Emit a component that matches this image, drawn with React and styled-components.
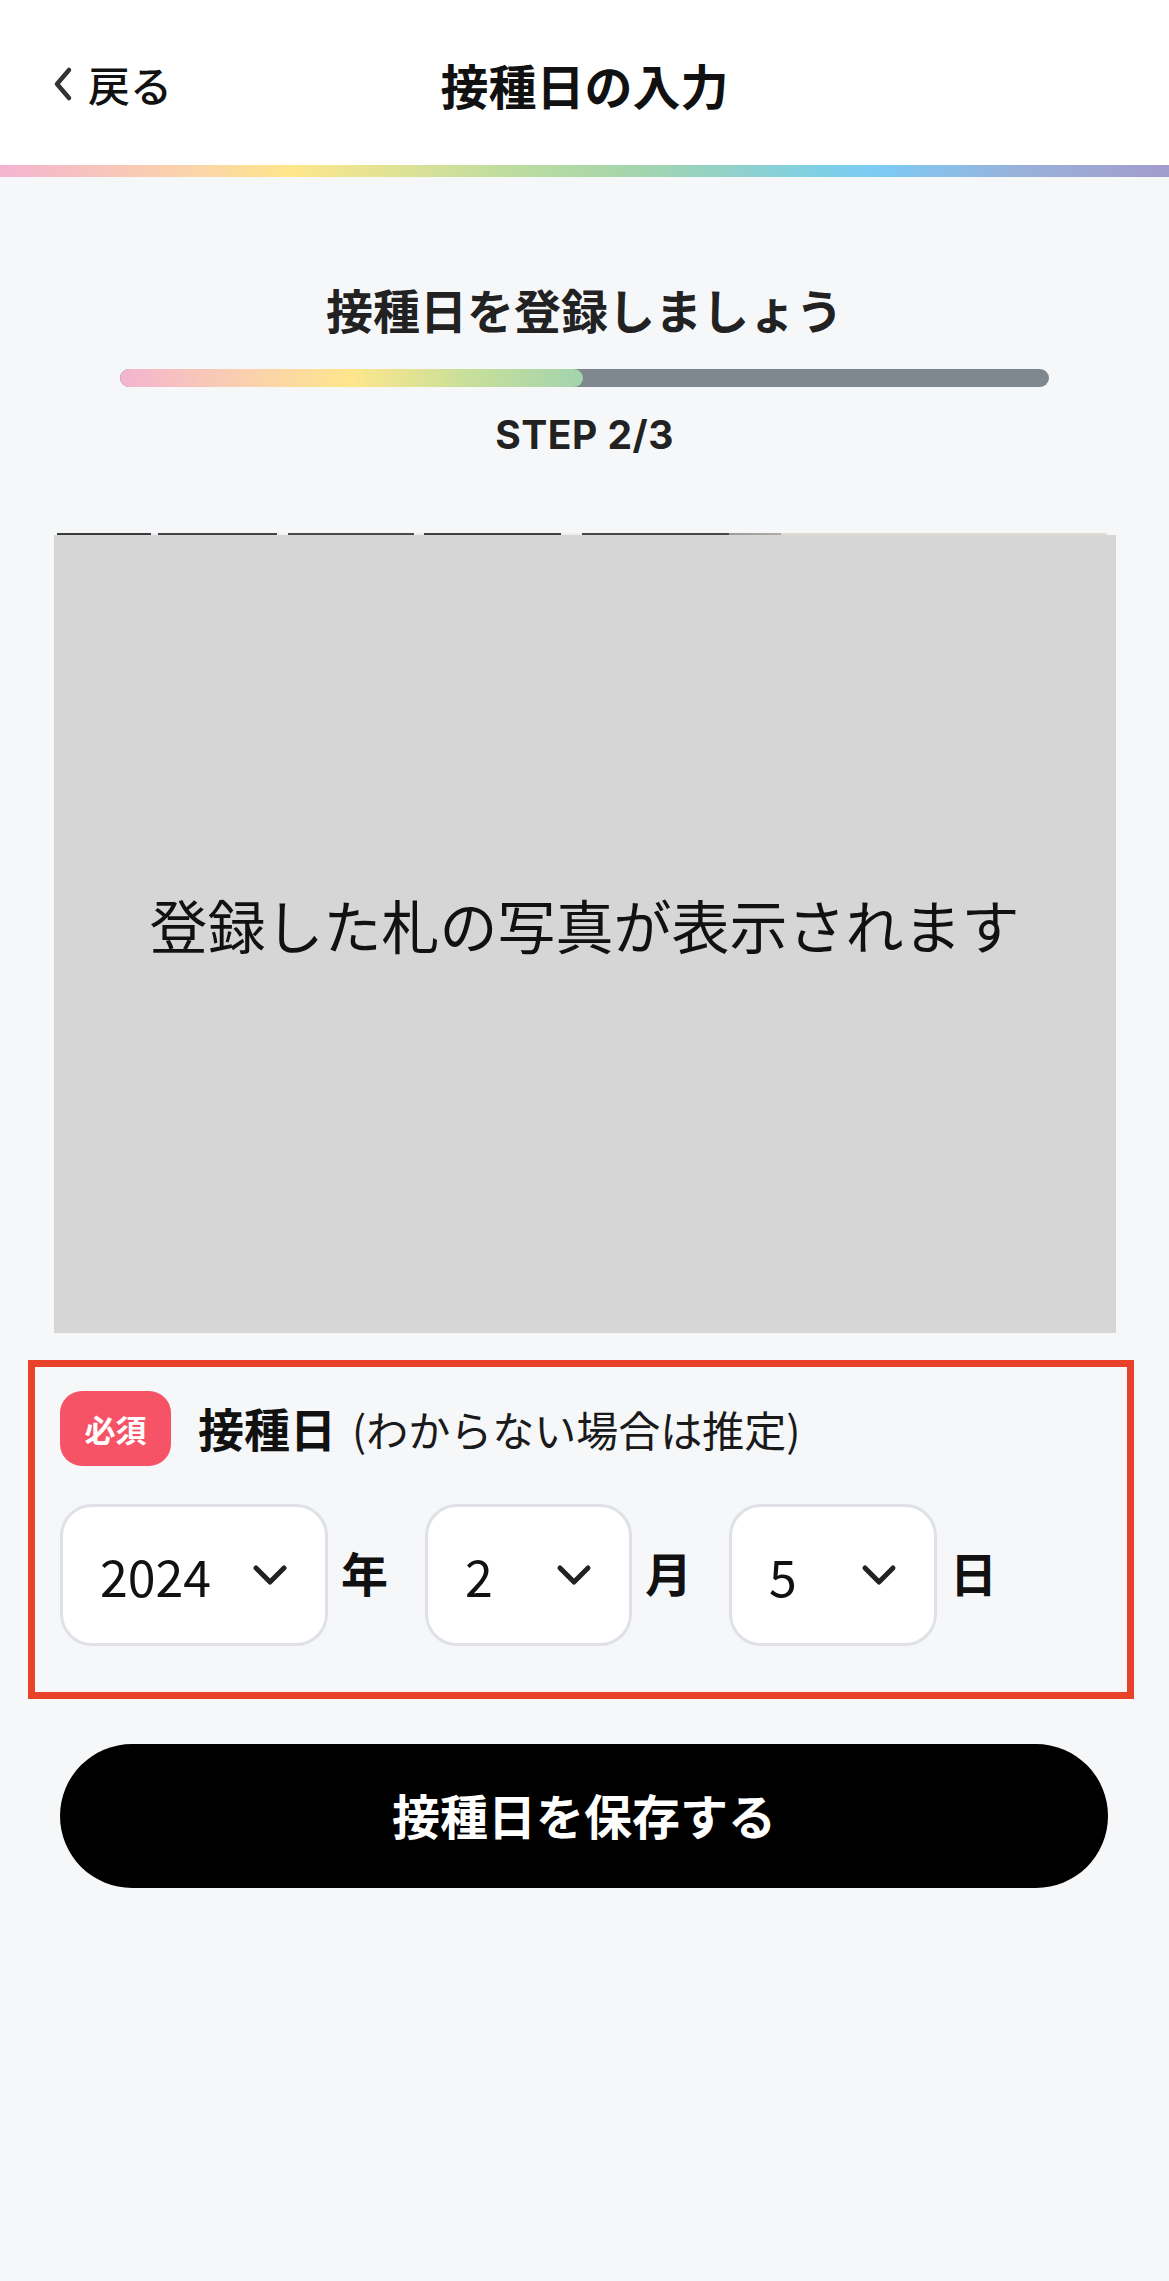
import React from "react";
import styled, { createGlobalStyle } from "styled-components";

const Global = createGlobalStyle`
  html, body { margin: 0; padding: 0; }
  body {
    background: #f6f7f9;
    font-family: "Noto Sans CJK JP", "Noto Sans", sans-serif;
    color: #1c1c1c;
  }
`;

const Page = styled.div`
  width: 1169px;
  min-height: 2281px;
  background: #f6f7f9;
`;

const Header = styled.header`
  height: 165px;
  background: #ffffff;
  display: grid;
  grid-template-columns: 1fr auto 1fr;
  align-items: center;
`;

const Back = styled.div`
  display: flex;
  align-items: center;
  gap: 14px;
  padding-left: 52px;
  font-size: 42px;
  font-weight: 500;
  line-height: 1;
  color: #111;
  padding-top: 2px;
`;

const Title = styled.h1`
  margin: 0;
  font-size: 48px;
  font-weight: 700;
  line-height: 1;
  color: #111;
  padding-top: 2px;
`;

const Rainbow = styled.div`
  height: 12px;
  background: linear-gradient(
    90deg,
    #f3b4d0 0%,
    #fbd3aa 16%,
    #fee68c 25%,
    #b9dca0 45%,
    #a3d4ae 55%,
    #7fcfe4 70%,
    #7ccbf5 75%,
    #9ab0d8 88%,
    #a29ccc 100%
  );
`;

const Content = styled.main`
  display: flex;
  flex-direction: column;
  align-items: center;
  padding-top: 99px;
`;

const Heading = styled.h2`
  margin: 0;
  font-size: 47px;
  font-weight: 700;
  line-height: 66px;
  color: #222;
  padding-bottom: 2px;
`;

const Track = styled.div`
  margin-top: 25px;
  width: 929px;
  height: 18px;
  border-radius: 9px;
  background: #7f888f;
  overflow: hidden;
`;

const Fill = styled.div`
  height: 100%;
  border-radius: 9px;
  background: linear-gradient(90deg, #f3b4d0 0%, #fbd3aa 30%, #fee68c 50%, #c8df9a 75%, #a3d4ae 100%);
`;

const Step = styled.div`
  margin-top: 23px;
  font-family: "Inter", "Noto Sans", sans-serif;
  font-size: 39px;
  font-weight: 700;
  line-height: 50px;
  letter-spacing: 0.5px;
  color: #222;
`;

const Photo = styled.div`
  margin-top: 73px;
  width: 1062px;
  display: flex;
  flex-direction: column;
`;

const PhotoEdge = styled.div`
  height: 2px;
  margin: 0 9px 0 3px;
  background: linear-gradient(
    90deg,
    #3a3a3a 0%, #3a3a3a 9%, #eef 9%, #eef 9.6%,
    #444 9.6%, #444 21%, #f4f4f4 21%, #f4f4f4 22%,
    #4a4a4a 22%, #4a4a4a 34%, #f0f0f0 34%, #f0f0f0 35%,
    #404040 35%, #404040 48%, #eee 48%, #eee 50%,
    #484848 50%, #484848 64%, #9a9a9a 64%, #b0aca6 69%, #e2dbd0 69%, #e2dbd0 100%
  );
`;

const PhotoBody = styled.div`
  height: 798px;
  background: #d6d6d6;
  display: flex;
  align-items: center;
  justify-content: center;
  font-size: 58px;
  font-weight: 400;
  color: #111;
  padding-bottom: 20px;
  box-sizing: border-box;
`;

const FormBox = styled.section`
  align-self: flex-start;
  margin-top: 27px;
  margin-left: 28px;
  width: 1106px;
  box-sizing: border-box;
  border: 7px solid #e8432a;
  padding: 24px 25px 46px;
  display: flex;
  flex-direction: column;
  gap: 38px;
`;

const LabelRow = styled.div`
  display: flex;
  align-items: center;
  gap: 27px;
`;

const Badge = styled.span`
  width: 111px;
  height: 75px;
  border-radius: 22px;
  background: #f65466;
  color: #fff;
  font-size: 31px;
  font-weight: 700;
  display: flex;
  align-items: center;
  justify-content: center;
`;

const LabelText = styled.div`
  font-size: 46px;
  font-weight: 700;
  color: #111;
  display: flex;
  align-items: baseline;
  gap: 16px;
  margin-top: -4px;
`;

const Hint = styled.span`
  font-size: 42px;
  font-weight: 400;
  color: #1a1a1a;
`;

const DateRow = styled.div`
  display: flex;
  align-items: center;
  gap: 37px;
`;

const Group = styled.div`
  display: flex;
  align-items: center;
  gap: 13px;
`;

const Select = styled.div`
  width: ${(p) => p.$w}px;
  height: 142px;
  box-sizing: border-box;
  border: 3px solid #dfe1e6;
  border-radius: 32px;
  background: #fff;
  display: flex;
  align-items: center;
  justify-content: space-between;
  padding: 0 37px 0 37px;
  font-family: "Noto Sans CJK JP", sans-serif;
  font-size: 50px;
  font-weight: 400;
  color: #111;
`;

const Unit = styled.span`
  font-size: 47px;
  font-weight: 700;
  color: #111;
  line-height: 1;
  margin-top: -8px;
`;

const Button = styled.button`
  align-self: flex-start;
  margin-top: 45px;
  margin-left: 60px;
  width: 1048px;
  height: 144px;
  border: none;
  border-radius: 72px;
  background: #000;
  color: #fff;
  font-family: "Noto Sans CJK JP", sans-serif;
  font-size: 48px;
  font-weight: 700;
  display: flex;
  align-items: center;
  justify-content: center;
  padding: 0 0 4px;
`;

const Chevron = () => (
  <svg width="36" height="22" viewBox="0 0 36 22" fill="none">
    <polyline points="4,4 18,18 32,4" stroke="#222" strokeWidth="5" strokeLinecap="round" strokeLinejoin="round" />
  </svg>
);

const BackChevron = () => (
  <svg width="22" height="36" viewBox="0 0 22 36" fill="none">
    <polyline points="17,4 5,18 17,32" stroke="#333" strokeWidth="4.5" strokeLinecap="round" strokeLinejoin="round" />
  </svg>
);

const dateParts = [
  { value: "2024", unit: "年", w: 268 },
  { value: "2", unit: "月", w: 207 },
  { value: "5", unit: "日", w: 208 },
];

export default function App() {
  return (
    <>
      <Global />
      <Page>
        <Header>
          <Back>
            <BackChevron />
            <span>戻る</span>
          </Back>
          <Title>接種日の入力</Title>
          <div />
        </Header>
        <Rainbow />
        <Content>
          <Heading>接種日を登録しましょう</Heading>
          <Track>
            <Fill style={{ width: `${(463 / 929) * 100}%` }} />
          </Track>
          <Step>STEP 2/3</Step>
          <Photo>
            <PhotoEdge />
            <PhotoBody>登録した札の写真が表示されます</PhotoBody>
          </Photo>
          <FormBox>
            <LabelRow>
              <Badge>必須</Badge>
              <LabelText>
                接種日<Hint>(わからない場合は推定)</Hint>
              </LabelText>
            </LabelRow>
            <DateRow>
              {dateParts.map((d) => (
                <Group key={d.unit}>
                  <Select $w={d.w}>
                    <span>{d.value}</span>
                    <Chevron />
                  </Select>
                  <Unit>{d.unit}</Unit>
                </Group>
              ))}
            </DateRow>
          </FormBox>
          <Button>接種日を保存する</Button>
        </Content>
      </Page>
    </>
  );
}
